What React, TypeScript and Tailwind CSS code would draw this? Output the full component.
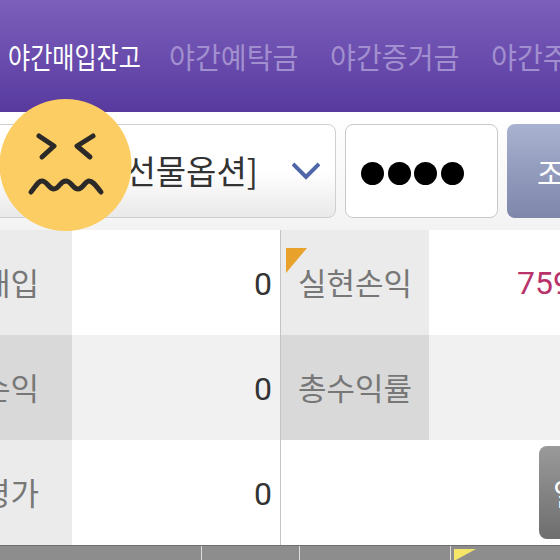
const tabs = ['야간매입잔고', '야간예탁금', '야간증거금', '야간주문가능'];

function Label({ text, className, corner }: { text?: string; className: string; corner?: boolean }) {
  return (
    <div className={`relative flex items-center justify-center text-[31px] text-[#777777] ${className}`}>
      {corner && (
        <svg className="absolute left-[5px] top-[18px]" width="21" height="25" viewBox="0 0 21 25">
          <polygon points="0,0 21,0 0,25" fill="#e8a22c" />
        </svg>
      )}
      {text}
    </div>
  );
}

function Value({ text, className }: { text?: string; className: string }) {
  return (
    <div className={`flex items-center justify-end pt-[2px] pr-[8px] font-['Roboto',sans-serif] text-[32px] text-[#333333] ${className}`}>
      {text}
    </div>
  );
}

export default function App() {
  return (
    <div className="relative flex h-[560px] w-[560px] flex-col overflow-hidden bg-[#f6f6f6] font-['Noto_Sans_CJK_KR',sans-serif]">
      {/* tabs */}
      <div className="flex h-[112px] shrink-0 items-center bg-gradient-to-b from-[#7c5fbb] to-[#583a9f] pt-[2px] pl-2">
        {tabs.map((tab, i) => (
          <div
            key={tab}
            className={`w-[161px] shrink-0 origin-left whitespace-nowrap text-[29px] ${i === 0 ? 'scale-x-[0.83] text-white' : 'scale-x-[0.97] text-[#a28fd0]'}`}
          >
            {tab}
          </div>
        ))}
      </div>

      {/* search bar */}
      <div className="flex h-[118px] shrink-0 gap-[9px] bg-gradient-to-b from-white to-[#f3f3f3] pt-3 pb-3">
        <div className="-ml-6 flex h-[94px] w-[360px] shrink-0 items-center justify-end rounded-lg border border-[#cfcfcf] bg-gradient-to-b from-white via-white to-[#e9e9e9] pr-[15px]">
          <span className="mr-[34px] whitespace-nowrap text-[33px] text-[#333333]">[선물옵션]</span>
          <svg width="28" height="18" viewBox="0 0 28 18" fill="none" stroke="#4f67a8" strokeWidth="4">
            <path d="M1 2 L14 15 L27 2" />
          </svg>
        </div>
        <div className="flex h-[94px] w-[153px] shrink-0 items-center gap-[3.5px] rounded-lg border border-[#c9c9c9] bg-white pt-[4px] pl-[15px]">
          <div className="h-[23px] w-[23px] rounded-full bg-black" />
          <div className="h-[23px] w-[23px] rounded-full bg-black" />
          <div className="h-[23px] w-[23px] rounded-full bg-black" />
          <div className="h-[23px] w-[23px] rounded-full bg-black" />
        </div>
        <div className="flex h-[94px] w-[90px] shrink-0 items-center whitespace-nowrap rounded-lg bg-gradient-to-b from-[#aab2d1] to-[#7e86aa] pl-[30px] text-[30px] text-white">
          조회
        </div>
      </div>

      {/* balance table */}
      <div className="grid h-[315px] shrink-0 grid-cols-[72px_209px_148px_131px] grid-rows-3">
        <Label text="총매입" className="justify-end overflow-hidden whitespace-nowrap bg-[#ebebeb] pr-[33px]" />
        <Value text="0" className="border-r border-[#c4c4c4] bg-white" />
        <Label text="실현손익" corner className="bg-[#ebebeb]" />
        <div className="flex items-center overflow-hidden whitespace-nowrap bg-white pl-[88px] font-['Roboto',sans-serif] text-[32px] text-[#b8336a]">
          759,000
        </div>

        <Label text="평가손익" className="justify-end overflow-hidden whitespace-nowrap bg-[#d9d9d9] pr-[33px]" />
        <Value text="0" className="border-r border-[#c4c4c4] bg-[#f1f1f1]" />
        <Label text="총수익률" className="bg-[#d9d9d9]" />
        <div className="bg-[#f1f1f1]" />

        <Label text="총평가" className="justify-end overflow-hidden whitespace-nowrap bg-[#ebebeb] pr-[33px]" />
        <Value text="0" className="border-r border-[#c4c4c4] bg-white" />
        <div className="bg-white" />
        <div className="flex items-center overflow-hidden bg-white pl-[110px]">
          <div className="flex h-[93px] w-[60px] shrink-0 items-center whitespace-nowrap rounded-lg bg-gradient-to-b from-[#9a9a9a] to-[#6e6e6e] pl-[14px] text-[30px] text-white">
            일괄
          </div>
        </div>
      </div>

      {/* bottom tabs */}
      <div className="flex flex-1 border-t border-[#6f6f6f] bg-[#8d8d8d]">
        <div className="w-[202px] border-r border-[#dddddd]" />
        <div className="w-[98px] border-r border-[#dddddd]" />
        <div className="w-[151px] border-r border-[#dddddd]" />
        <svg className="mt-[3px] ml-[3px]" width="22" height="12" viewBox="0 0 22 12">
          <polygon points="0,0 22,0 0,12" fill="#f5e66a" />
        </svg>
      </div>

      {/* emoji overlay */}
      <svg className="absolute left-0 top-[98px]" width="132" height="134" viewBox="0 0 132 134" fill="none">
        <circle cx="65.5" cy="67" r="66" fill="#fccd63" />
        <g stroke="#2b2a28" strokeWidth="5" strokeLinecap="round" strokeLinejoin="round">
          <path d="M39 38 L54 48 L42 59" />
          <path d="M93 38 L77 48 L90 59" />
          <path d="M31 94 C36 88 38 83 42 83 C47 83 49 91 54 91 C59 91 60 83 66 83 C71 83 73 91 78 91 C83 91 85 83 89 83 C93 83 96 88 101 94" />
        </g>
      </svg>
    </div>
  );
}
